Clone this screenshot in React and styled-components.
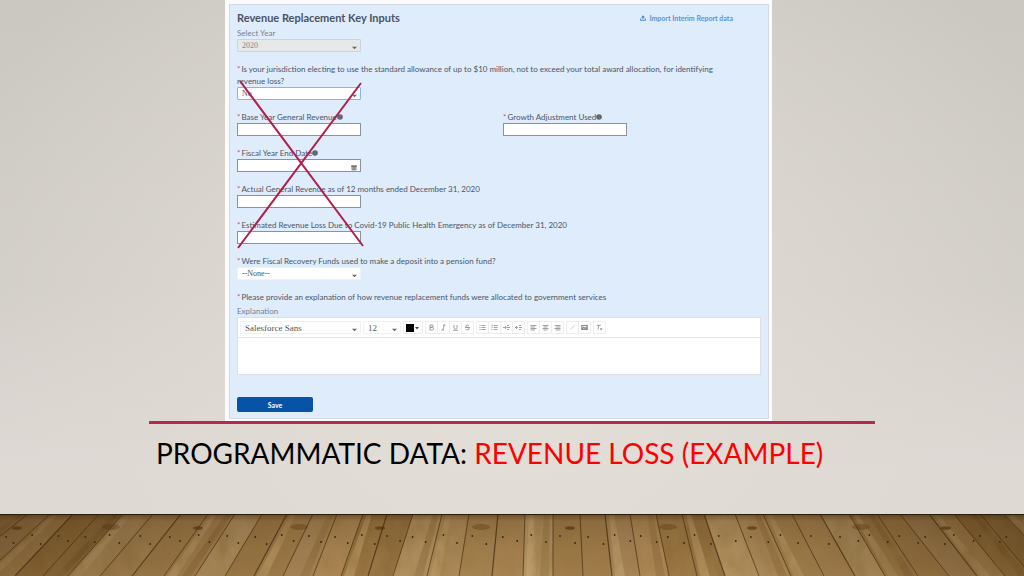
import React, { useState } from 'react'
import styled, { createGlobalStyle } from 'styled-components'


const GlobalStyle = createGlobalStyle`
    * {
        box-sizing: border-box;
    }

    body {
        margin: 0;
        font-family: Lato, "Open Sans", sans-serif;
        color: #4b5563;
    }

    button, input, select, textarea {
        font-family: inherit;
        color: inherit;
        margin: 0;
        padding: 0;
    }
`

const Slide = styled.div`
    min-height: 100vh;
    display: flex;
    flex-direction: column;
    overflow: hidden;
    background:
        radial-gradient(ellipse 60% 90% at 50% 62%, rgba(228, 223, 217, .95), rgba(223, 218, 211, .65) 55%, rgba(205, 201, 195, 0) 100%),
        linear-gradient(#cbc8c2, #d0ccc6 50%, #dfd9d5 82%);
`

const Content = styled.main`
    flex: 1;
    width: 70.9%;
    margin: 0 auto;
`

const Panel = styled.form`
    width: 547px;
    max-width: 100%;
    margin-left: 76px;
    padding: 4px 3px 2px 4px;
    background: #fbfbfd;
`

const PanelBody = styled.div`
    padding: 6px 7px;
    background: #dfecfc;
    border: 1px solid #d3dae4;
`

const PanelHeader = styled.header`
    display: flex;
    justify-content: space-between;
    align-items: center;
    height: 14px;
    margin-bottom: 2px;
    padding-right: 28px;
`

const PanelTitle = styled.h2`
    margin: 0;
    font-size: 11px;
    line-height: 14px;
    font-weight: 700;
    color: #4b5362;
`

const ImportLink = styled.a`
    display: flex;
    align-items: center;
    gap: 3px;
    font-size: 7px;
    line-height: 12px;
    font-weight: 700;
    color: #5b93d6;
    text-decoration: none;
`

const Field = styled.div`
    margin-bottom: 11px;
`

const Columns = styled.div`
    display: grid;
    grid-template-columns: 1fr 1fr;
    column-gap: 8px;
`

const Label = styled.label`
    display: block;
    padding-right: 24px;
    font-size: 8px;
    line-height: 12px;
    color: ${props => props.$muted ? '#77808e' : '#4b5563'};

    svg {
        vertical-align: 0;
    }
`

const Caption = styled(Label)`
    margin-top: 2px;
`

const Required = styled.span`
    margin-right: 1px;
    color: #d9506a;
`

const Control = styled.div`
    position: relative;
    display: flex;
    width: ${props => props.$width || 124}px;
    height: ${props => props.$height || 13}px;
`

const TextInput = styled.input`
    width: 100%;
    border: 1px solid #8b929d;
    background: #fff;
    font-size: 8px;
    outline: none;
`

const borders = {
    plain: '#eef1f5',
    disabled: '#cfd3d8',
    focus: '#7cb8f2',
}

const SelectInput = styled.select`
    width: 100%;
    padding: 0 4px;
    appearance: none;
    border: 1px solid ${props => borders[props.$look || 'plain']};
    border-radius: 1px;
    background: ${props => props.$look === 'disabled' ? '#e6e8ea' : '#fff'};
    color: ${props => props.$look === 'disabled' ? '#83878c' : '#50545a'};
    font-family: "Liberation Serif", serif;
    font-size: 8px;
    line-height: 10px;
    opacity: 1;
    outline: none;
`

const ToolSelect = styled(SelectInput)`
    font-size: 9px;
`

const ControlIcon = styled.svg`
    position: absolute;
    right: 4px;
    bottom: 1px;
    pointer-events: none;
`

const Crossed = styled.section`
    position: relative;
`

const Cross = styled.svg`
    position: absolute;
    left: 0;
    top: 17px;
    pointer-events: none;
`

const Editor = styled.div`
    margin-bottom: 22px;
    border: 1px solid #dbe0e7;
    background: #fff;
`

const Toolbar = styled.div`
    display: flex;
    align-items: center;
    gap: 2px;
    height: 20px;
    padding: 0 2px;
    border-bottom: 1px solid #e6e8eb;
`

const ToolGroup = styled.div`
    display: flex;
    border: 1px solid #eceef0;
    border-right: none;
`

const Tool = styled.button`
    display: flex;
    align-items: center;
    justify-content: center;
    width: 12px;
    height: 11px;
    border: none;
    border-right: 1px solid #eceef0;
    background: #fff;
`

const Swatch = styled.button`
    display: flex;
    align-items: center;
    justify-content: center;
    gap: 1px;
    width: 20px;
    height: 13px;
    border: 1px solid #eceef0;
    background: #fff;
`

const TextArea = styled.textarea`
    display: block;
    width: 100%;
    height: 36px;
    border: none;
    outline: none;
    resize: none;
    font-size: 8px;
`

const SaveButton = styled.button`
    display: block;
    width: 76px;
    height: 15px;
    border: none;
    border-radius: 2px;
    background: #0754a6;
    color: #fff;
    font-size: 7px;
    font-weight: 700;
`

const Rule = styled.hr`
    height: 3px;
    margin: 0;
    border: none;
    background: #b5294f;
`

const Heading = styled.h1`
    margin: 12px 0 0;
    padding-left: 7px;
    font-size: 28px;
    line-height: 34px;
    font-weight: 400;
    text-transform: uppercase;
    white-space: nowrap;
    color: #000;
`

const Highlight = styled.span`
    color: #fe0000;
`

const Floor = styled.svg`
    display: block;
    width: 100%;
    height: 62px;
`


/**************** ICONS ****************/

const Caret = () => (
    <ControlIcon width="5" height="5" viewBox="0 0 5 5" aria-hidden="true">
        <path d="M0 .8h5L2.500 3.300z" fill="#666" />
    </ControlIcon>
)

const Calendar = () => (
    <ControlIcon width="6" height="6" viewBox="0 0 6 6" aria-hidden="true">
        <path d="M.5 1h5v4.500h-5z" fill="#b9bcc1" />
        <path d="M.5.5h5v1.500h-5zM.5 3.200h5M.5 4.500h5M2.200 2v3.500M3.800 2v3.500" fill="#777" stroke="#777" strokeWidth=".5" />
    </ControlIcon>
)

const Info = () => (
    <svg width="6" height="6" viewBox="0 0 6 6" aria-hidden="true">
        <circle cx="3" cy="3" r="2.800" fill="#5a6270" />
        <path d="M3 2.700v1.800M3 1.300v.7" stroke="#8f99a8" strokeWidth=".7" />
    </svg>
)

const Upload = () => (
    <svg width="6" height="6" viewBox="0 0 6 6" aria-hidden="true">
        <path d="M3 .2 5 2.400H3.600V4H2.400V2.400H1zM.1 3.600h.9v1.200h4V3.600h.9v2.200H.1z" fill="#4a86d0" />
    </svg>
)

const icons = {
    bold: <path d="M2 1v5h2.200a1.300 1.300 0 0 0 0-2.600H2h2a1.200 1.200 0 0 0 0-2.400z" />,
    italic: <path d="M3 1h2.500M1.500 6H4M4.300 1 2.800 6" />,
    underline: <path d="M2 1v2.500a1.500 1.500 0 0 0 3 0V1M1 6.300h5" />,
    strike: <path d="M5 1.700C4 .7 2 1 2 2.200c0 1.400 3.200 1 3.200 2.500C5.200 6.200 2.700 6.200 1.800 5M1 3.500h5" />,
    bullets: <path d="M.5 1.500h1M.5 3.500h1M.5 5.500h1M2.500 1.500h4M2.500 3.500h4M2.500 5.500h4" />,
    numbers: <path d="M1 .7v1.600M.5 3.500h1M.5 5.500h1M3 1.500h3.500M3 3.500h3.500M3 5.500h3.500" />,
    indent: <path d="M0 3.500h3M2 2l1.500 1.500L2 5M4 1.500h2M4 3.500h3M4 5.500h2" />,
    outdent: <path d="M0 3.500h3M2 2 .5 3.500 2 5M4 1.500h2M4 3.500h3M4 5.500h2" />,
    left: <path d="M.5 1.500h6M.5 3h4.500M.5 4.500h6M.5 6h4.500" />,
    center: <path d="M.5 1.500h6M1.500 3h4M.5 4.500h6M1.500 6h4" />,
    right: <path d="M.5 1.500h6M2 3h4.500M.5 4.500h6M2 6h4.500" />,
    link: <path d="M1.500 5.500 5.500 1.500" strokeOpacity=".5" />,
    image: <path d="M.8 1.500h5.400v4H.8zM1 5l1.700-1.700L4 4.500l1-1 1 1.500" strokeWidth="1.200" />,
    clear: <path d="M.8 1.300h4M2.800 1.300 2 5.500M4.200 4l2 2M6.200 4l-2 2" />,
}

const toolGroups = [
    [['bold', 'Bold'], ['italic', 'Italic'], ['underline', 'Underline'], ['strike', 'Strikethrough']],
    [['bullets', 'Bulleted list'], ['numbers', 'Numbered list'], ['indent', 'Indent'], ['outdent', 'Outdent']],
    [['left', 'Align left'], ['center', 'Align center'], ['right', 'Align right']],
    [['link', 'Link'], ['image', 'Image']],
    [['clear', 'Remove formatting']],
]


/**************** WOODEN FLOOR ****************/

// x of every seam between planks: [top edge, bottom edge]
const seams = [
    [-28, -118], [0, -84], [28, -50], [50, -17], [73, 15], [99, 43], [123, 68], [153, 100], [181, 132], [208, 164],
    [235, 195], [262, 225], [287, 254], [313, 283], [337, 313], [363, 341], [387, 368], [413, 393],
    [442, 427], [469, 459], [498, 492], [525, 523], [553, 553], [580, 583], [605, 612], [630, 640],
    [656, 669], [682, 697], [704, 725], [735, 759], [763, 791], [792, 824], [820, 855], [849, 885],
    [877, 918], [900, 949], [929, 977], [954, 1005], [980, 1032], [1004, 1062], [1032, 1098],
]

const woods = ['#a07c4a', '#a88552', '#94703f', '#a9865a', '#b69766', '#b18e5d', '#98733f', '#a27d4b', '#ab8655', '#b69563', '#b08a58']

const Planks = () => (
    <Floor viewBox="0 0 1024 62" preserveAspectRatio="none" aria-hidden="true">
        <defs>
            <linearGradient id="depth" x1="0" y1="0" x2="0" y2="1">
                <stop offset="0" stopColor="#2e1d08" stopOpacity=".5" />
                <stop offset=".12" stopColor="#4a3212" stopOpacity=".22" />
                <stop offset=".6" stopColor="#4a3212" stopOpacity=".05" />
                <stop offset="1" stopColor="#c49a62" stopOpacity=".1" />
            </linearGradient>
            <linearGradient id="sides" x1="0" y1="0" x2="1" y2="0">
                <stop offset="0" stopColor="#3c2609" stopOpacity=".38" />
                <stop offset=".3" stopColor="#3c2609" stopOpacity=".06" />
                <stop offset=".7" stopColor="#3c2609" stopOpacity=".03" />
                <stop offset="1" stopColor="#3c2609" stopOpacity=".38" />
            </linearGradient>
            <filter id="grain" x="0" y="0" width="1" height="1">
                <feTurbulence type="fractalNoise" baseFrequency=".06 .035" numOctaves="4" seed="8" />
                <feColorMatrix values="0 0 0 0 .36  0 0 0 0 .22  0 0 0 0 .07  1.400 0 0 0 -.5" />
            </filter>
        </defs>
        <rect width="1024" height="62" fill="#a07c4a" />
        {seams.slice(0, -1).map(([top, bottom], i) => {
            const [nextTop, nextBottom] = seams[i + 1]
            return (
                <g key={top}>
                    <path d={`M${top} 0H${nextTop}L${nextBottom} 62H${bottom}z`} fill={woods[(i * 7) % woods.length]} />
                    {i % 3 === 0 && (
                        <path
                            d={`M${top + 4} 0h5L${bottom + 13} 62H${bottom + 3}z`}
                            fill="#cfb07c"
                            fillOpacity=".5"
                        />
                    )}
                    {i % 4 === 1 && (
                        <path
                            d={`M${nextTop - 9} 0h6L${nextBottom - 4} 62h-9z`}
                            fill="#684419"
                            fillOpacity=".25"
                        />
                    )}
                </g>
            )
        })}
        <rect width="1024" height="62" filter="url(#grain)" />
        {seams.map(([top, bottom], i) => {
            const slope = (bottom - top) / 62
            return (
                <g key={top}>
                    <path d={`M${top} 0L${bottom} 62`} stroke="#3f280f" strokeWidth={i % 4 === 0 ? 1.2 : .9} strokeOpacity=".75" />
                    <circle cx={top + slope * 23 + 7} cy={21 + i % 3} r=".9" fill="#39200a" />
                    <circle cx={top + slope * 29 + 22} cy={27 + i % 4} r=".9" fill="#39200a" />
                    {i % 7 === 1 && <ellipse cx={top + 17} cy="14" rx="5" ry="1.800" fill="#4a2a0b" fillOpacity=".6" />}
                    {i % 7 === 5 && <ellipse cx={top + 12} cy="13" rx="9" ry="3" fill="#5a3510" fillOpacity=".35" />}
                </g>
            )
        })}
        <rect width="1024" height="62" fill="url(#sides)" />
        <rect width="1024" height="62" fill="url(#depth)" />
        <rect width="1024" height="1" fill="#2c1c0c" />
    </Floor>
)


const FormField = ({ id, label, info, children }) => (
    <Field>
        <Label htmlFor={id}><Required>*</Required>{label}{info && <Info />}</Label>
        {children}
    </Field>
)

const App = () => {

    const [standard, setStandard] = useState('No')
    const [pension, setPension] = useState('--None--')
    const [explanation, setExplanation] = useState('')

    return (
        <Slide>
            <GlobalStyle />
            <Content>
                <Panel onSubmit={e => e.preventDefault()}>
                    <PanelBody>
                        <PanelHeader>
                            <PanelTitle>Revenue Replacement Key Inputs</PanelTitle>
                            <ImportLink href="#import"><Upload />Import Interim Report data</ImportLink>
                        </PanelHeader>

                        <Field>
                            <Label htmlFor="year" $muted>Select Year</Label>
                            <Control>
                                <SelectInput id="year" $look="disabled" disabled defaultValue="2020">
                                    <option>2020</option>
                                </SelectInput>
                                <Caret />
                            </Control>
                        </Field>

                        <Crossed>
                            <FormField
                                id="standard"
                                label="Is your jurisdiction electing to use the standard allowance of up to $10 million, not to exceed your total award allocation, for identifying revenue loss?"
                            >
                                <Control>
                                    <SelectInput id="standard" $look="focus" value={standard} onChange={e => setStandard(e.target.value)}>
                                        <option>No</option>
                                        <option>Yes</option>
                                    </SelectInput>
                                    <Caret />
                                </Control>
                            </FormField>
                            <Columns>
                                <FormField id="base" label="Base Year General Revenue" info>
                                    <Control><TextInput id="base" /></Control>
                                </FormField>
                                <FormField id="growth" label="Growth Adjustment Used" info>
                                    <Control><TextInput id="growth" /></Control>
                                </FormField>
                            </Columns>
                            <FormField id="fiscal" label="Fiscal Year End Date" info>
                                <Control>
                                    <TextInput id="fiscal" />
                                    <Calendar />
                                </Control>
                            </FormField>
                            <FormField id="actual" label="Actual General Revenue as of 12 months ended December 31, 2020">
                                <Control><TextInput id="actual" /></Control>
                            </FormField>
                            <FormField id="loss" label="Estimated Revenue Loss Due to Covid-19 Public Health Emergency as of December 31, 2020">
                                <Control><TextInput id="loss" /></Control>
                            </FormField>
                            <Cross width="128" height="170" viewBox="0 0 128 170" aria-hidden="true">
                                <path d="M3 1 126 166M124 3 1 168" stroke="#b01f4b" strokeWidth="2" />
                            </Cross>
                        </Crossed>

                        <FormField id="pension" label="Were Fiscal Recovery Funds used to make a deposit into a pension fund?">
                            <Control>
                                <SelectInput id="pension" value={pension} onChange={e => setPension(e.target.value)}>
                                    <option>--None--</option>
                                    <option>Yes</option>
                                    <option>No</option>
                                </SelectInput>
                                <Caret />
                            </Control>
                        </FormField>

                        <Label htmlFor="explanation">
                            <Required>*</Required>Please provide an explanation of how revenue replacement funds were allocated to government services
                        </Label>
                        <Caption as="div" $muted>Explanation</Caption>
                        <Editor>
                            <Toolbar>
                                <Control $width={121}>
                                    <ToolSelect aria-label="Font">
                                        <option>Salesforce Sans</option>
                                    </ToolSelect>
                                    <Caret />
                                </Control>
                                <Control $width={38}>
                                    <ToolSelect aria-label="Font size">
                                        <option>12</option>
                                    </ToolSelect>
                                    <Caret />
                                </Control>
                                <Swatch type="button" aria-label="Text color">
                                    <svg width="13" height="8" viewBox="0 0 13 8">
                                        <path d="M0 0h8v8H0z" fill="#000" />
                                        <path d="M9 3h4l-2 2.500z" fill="#444" />
                                    </svg>
                                </Swatch>
                                {toolGroups.map((group, i) => (
                                    <ToolGroup key={i}>
                                        {group.map(([icon, name]) => (
                                            <Tool key={icon} type="button" aria-label={name}>
                                                <svg width="7" height="7" viewBox="0 0 7 7" fill="none" stroke="#888" strokeWidth=".8">
                                                    {icons[icon]}
                                                </svg>
                                            </Tool>
                                        ))}
                                    </ToolGroup>
                                ))}
                            </Toolbar>
                            <TextArea id="explanation" value={explanation} onChange={e => setExplanation(e.target.value)} />
                        </Editor>

                        <SaveButton type="submit">Save</SaveButton>
                    </PanelBody>
                </Panel>
                <Rule />
                <Heading>Programmatic Data: <Highlight>Revenue Loss (Example)</Highlight></Heading>
            </Content>
            <Planks />
        </Slide>
    )
}

export default App
